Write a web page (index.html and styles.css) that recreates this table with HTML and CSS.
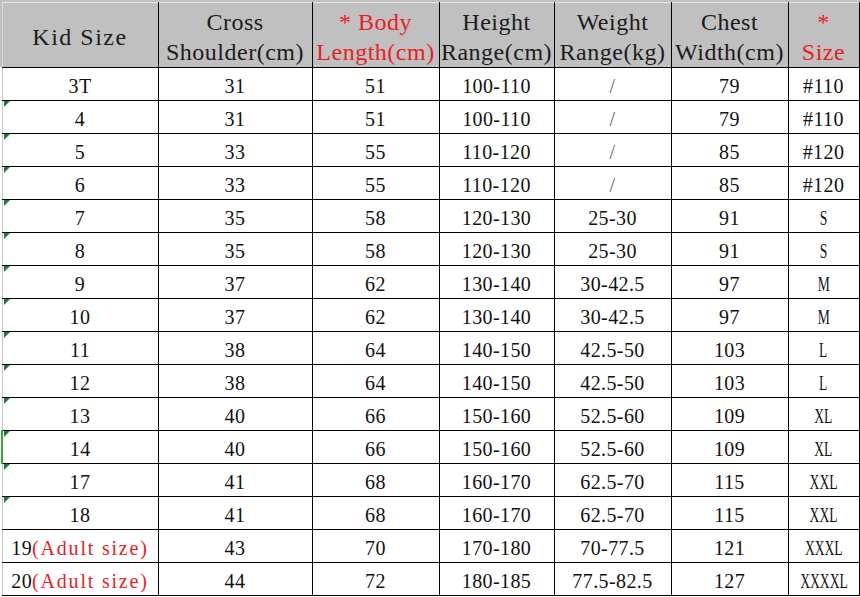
FILE: index.html
```html
<!DOCTYPE html>
<html>
<head>
<meta charset="utf-8">
<link rel="stylesheet" href="styles.css">
</head>
<body>
<table class="chart">
  <colgroup>
    <col class="c1"><col class="c2"><col class="c3"><col class="c4"><col class="c5"><col class="c6"><col class="c7">
  </colgroup>
  <thead>
    <tr>
      <th class="first">Kid Size</th>
      <th>Cross<br>Shoulder(cm)</th>
      <th class="red">* Body<br>Length(cm)</th>
      <th>Height<br>Range(cm)</th>
      <th>Weight<br>Range(kg)</th>
      <th>Chest<br>Width(cm)</th>
      <th class="red">*<br>Size</th>
    </tr>
  </thead>
  <tbody>
    <tr><td class="first">3T</td><td>31</td><td>51</td><td>100-110</td><td class="slash">/</td><td>79</td><td>#110</td></tr>
    <tr><td class="first mark">4</td><td>31</td><td>51</td><td>100-110</td><td class="slash">/</td><td>79</td><td>#110</td></tr>
    <tr><td class="first mark">5</td><td>33</td><td>55</td><td>110-120</td><td class="slash">/</td><td>85</td><td>#120</td></tr>
    <tr><td class="first mark">6</td><td>33</td><td>55</td><td>110-120</td><td class="slash">/</td><td>85</td><td>#120</td></tr>
    <tr><td class="first mark">7</td><td>35</td><td>58</td><td>120-130</td><td>25-30</td><td>91</td><td><span class="sz">S</span></td></tr>
    <tr><td class="first mark">8</td><td>35</td><td>58</td><td>120-130</td><td>25-30</td><td>91</td><td><span class="sz">S</span></td></tr>
    <tr><td class="first mark">9</td><td>37</td><td>62</td><td>130-140</td><td>30-42.5</td><td>97</td><td><span class="sz">M</span></td></tr>
    <tr><td class="first mark">10</td><td>37</td><td>62</td><td>130-140</td><td>30-42.5</td><td>97</td><td><span class="sz">M</span></td></tr>
    <tr><td class="first mark">11</td><td>38</td><td>64</td><td>140-150</td><td>42.5-50</td><td>103</td><td><span class="sz">L</span></td></tr>
    <tr><td class="first mark">12</td><td>38</td><td>64</td><td>140-150</td><td>42.5-50</td><td>103</td><td><span class="sz">L</span></td></tr>
    <tr><td class="first mark">13</td><td>40</td><td>66</td><td>150-160</td><td>52.5-60</td><td>109</td><td><span class="sz">XL</span></td></tr>
    <tr><td class="first mark green">14</td><td>40</td><td>66</td><td>150-160</td><td>52.5-60</td><td>109</td><td><span class="sz">XL</span></td></tr>
    <tr><td class="first mark">17</td><td>41</td><td>68</td><td>160-170</td><td>62.5-70</td><td>115</td><td><span class="sz">XXL</span></td></tr>
    <tr><td class="first mark">18</td><td>41</td><td>68</td><td>160-170</td><td>62.5-70</td><td>115</td><td><span class="sz">XXL</span></td></tr>
    <tr><td class="first">19<span class="adult">(Adult size)</span></td><td>43</td><td>70</td><td>170-180</td><td>70-77.5</td><td>121</td><td><span class="sz">XXXL</span></td></tr>
    <tr><td class="first">20<span class="adult">(Adult size)</span></td><td>44</td><td>72</td><td>180-185</td><td>77.5-82.5</td><td>127</td><td><span class="sz">XXXXL</span></td></tr>
  </tbody>
</table>
</body>
</html>
```

FILE: styles.css
```css
html, body {
  margin: 0;
  padding: 0;
}
body {
  background: linear-gradient(#c0c0c0 0, #c0c0c0 67px, #ffffff 67px) no-repeat;
  font-family: "Liberation Serif", "Times New Roman", serif;
  color: #111;
}
.chart {
  border-collapse: collapse;
  table-layout: fixed;
  width: 857px;
  margin: 2px 0 0 1px;
}
.c1 { width: 156px; }
.c2 { width: 154px; }
.c3 { width: 127px; }
.c4 { width: 115px; }
.c5 { width: 117px; }
.c6 { width: 117px; }
.c7 { width: 71px; }

.chart th {
  background: #c0c0c0;
  height: 60px;
  padding: 4px 0 0 0;
  font-weight: normal;
  font-size: 24px;
  line-height: 30px;
  letter-spacing: 0.5px;
  color: #1c1c1c;
  text-align: center;
  vertical-align: middle;
  border: 1px solid #000;
  border-top: 1px solid #e4e4e4;
  white-space: nowrap;
}
.chart th.first {
  border-left: 1px solid #d8d8d8;
  letter-spacing: 1.5px;
}
.chart th.red {
  color: #ec1c24;
}
.chart td {
  height: 28px;
  padding: 4px 0 0 0;
  font-size: 20px;
  line-height: 22px;
  letter-spacing: 0.4px;
  text-align: center;
  vertical-align: middle;
  border: 1px solid #000;
  white-space: nowrap;
}
.chart td.first {
  position: relative;
  border-left: 1px solid #c8c8c8;
}
.chart td.mark::before {
  content: "";
  position: absolute;
  left: 1px;
  top: 0;
  width: 0;
  height: 0;
  border-top: 6px solid #1f7a3a;
  border-right: 6px solid transparent;
}
.chart td.green {
  border-left: 2px solid #3aa63a;
}
.adult {
  color: #ec1c24;
  letter-spacing: 1.8px;
}
.slash {
  color: #666;
}
.sz {
  display: inline-block;
  transform: scaleX(0.68);
  letter-spacing: 0;
}
```
